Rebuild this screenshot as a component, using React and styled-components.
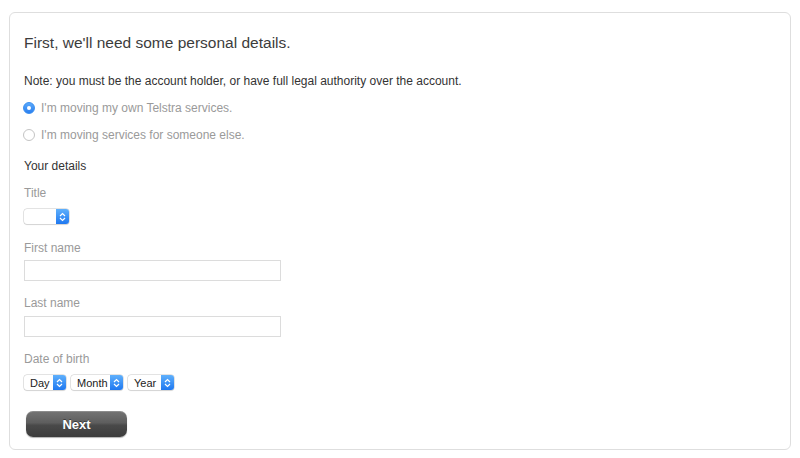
import React from 'react';
import styled, { createGlobalStyle } from 'styled-components';

const GlobalStyle = createGlobalStyle`
  html, body {
    margin: 0;
    padding: 0;
    background: #ffffff;
    font-family: "Liberation Sans", Arial, sans-serif;
  }
`;

const Page = styled.div`
  padding: 12px 9px 8px;
`;

const Card = styled.form`
  border: 1px solid #dedede;
  border-radius: 6px;
  padding: 20px 14px 12px;
  display: flex;
  flex-direction: column;
  align-items: flex-start;
`;

const Heading = styled.h2`
  margin: 0;
  font-size: 15.5px;
  line-height: 20px;
  font-weight: normal;
  color: #3c3c3c;
`;

const Note = styled.p`
  margin: 19px 0 0;
  font-size: 12px;
  line-height: 18px;
  color: #333;
`;

const RadioRow = styled.label`
  margin-top: 9px;
  display: flex;
  align-items: center;
  gap: 6px;
  font-size: 12px;
  line-height: 18px;
  color: #9a9a9a;
`;

const RadioDot = styled.span`
  width: 12px;
  height: 12px;
  margin-left: -1px;
  border-radius: 50%;
  box-sizing: border-box;
  display: flex;
  align-items: center;
  justify-content: center;
  border: 1px solid ${p => (p.$checked ? '#3a8ff0' : '#c4c4c4')};
  background: ${p => (p.$checked ? 'linear-gradient(#5aa9fb, #2a7ff0)' : '#fff')};

  &::after {
    content: '';
    width: 4px;
    height: 4px;
    border-radius: 50%;
    background: #fff;
    display: ${p => (p.$checked ? 'block' : 'none')};
  }
`;

const SubHeading = styled.div`
  margin-top: 13px;
  font-size: 12px;
  line-height: 18px;
  color: #333;
`;

const Label = styled.div`
  margin-top: ${p => p.$gap}px;
  font-size: 12px;
  line-height: 18px;
  color: #9a9a9a;
`;

const SelectRow = styled.div`
  margin-top: 7px;
  display: flex;
  gap: 5px;
`;

const SelectBox = styled.div`
  width: ${p => p.$width}px;
  height: 15px;
  box-sizing: border-box;
  display: flex;
  align-items: center;
  border-radius: 3px;
  background: #fff;
  box-shadow: 0 0 0 0.5px #c8c8c8, 0 1px 1px rgba(0, 0, 0, 0.12);
  overflow: hidden;
  font-size: 11px;
  color: #222;
`;

const SelectText = styled.span`
  flex: 1;
  padding-left: 6px;
`;

const Stepper = styled.span`
  width: 13px;
  height: 100%;
  display: flex;
  align-items: center;
  justify-content: center;
  background: linear-gradient(#5fb0fc, #1f78f0);
`;

const TextInput = styled.div`
  margin-top: ${p => p.$gap}px;
  width: 257px;
  height: 21px;
  box-sizing: border-box;
  border: 1px solid #dcdcdc;
  background: #fff;
`;

const NextButton = styled.button`
  margin: 21px 0 0 2px;
  width: 101px;
  height: 26px;
  border: none;
  border-radius: 7px;
  background: linear-gradient(#747474 0%, #5e5e5e 45%, #494949 55%, #3c3c3c 100%);
  box-shadow: inset 0 1px 0 rgba(255, 255, 255, 0.18), 0 1px 1px rgba(0, 0, 0, 0.3);
  color: #fff;
  font-family: "Liberation Sans", Arial, sans-serif;
  font-size: 13px;
  font-weight: bold;
  text-shadow: 0 -1px 0 rgba(0, 0, 0, 0.4);
  cursor: pointer;
`;

const Arrows = () => (
  <svg width="7" height="10" viewBox="0 0 7 10" fill="none" stroke="#fff" strokeWidth="1.2">
    <path d="M1 4 L3.5 1.5 L6 4" />
    <path d="M1 6 L3.5 8.5 L6 6" />
  </svg>
);

const Select = ({ width, text }) => (
  <SelectBox $width={width}>
    <SelectText>{text}</SelectText>
    <Stepper>
      <Arrows />
    </Stepper>
  </SelectBox>
);

export default function App() {
  return (
    <Page>
      <GlobalStyle />
      <Card onSubmit={e => e.preventDefault()}>
        <Heading>First, we'll need some personal details.</Heading>
        <Note>Note: you must be the account holder, or have full legal authority over the account.</Note>
        <RadioRow>
          <RadioDot $checked />
          I'm moving my own Telstra services.
        </RadioRow>
        <RadioRow>
          <RadioDot />
          I'm moving services for someone else.
        </RadioRow>
        <SubHeading>Your details</SubHeading>
        <Label $gap={9}>Title</Label>
        <SelectRow>
          <Select width={45} text="" />
        </SelectRow>
        <Label $gap={15}>First name</Label>
        <TextInput $gap={3} />
        <Label $gap={13}>Last name</Label>
        <TextInput $gap={4} />
        <Label $gap={13}>Date of birth</Label>
        <SelectRow>
          <Select width={42} text="Day" />
          <Select width={52} text="Month" />
          <Select width={46} text="Year" />
        </SelectRow>
        <NextButton type="submit">Next</NextButton>
      </Card>
    </Page>
  );
}
